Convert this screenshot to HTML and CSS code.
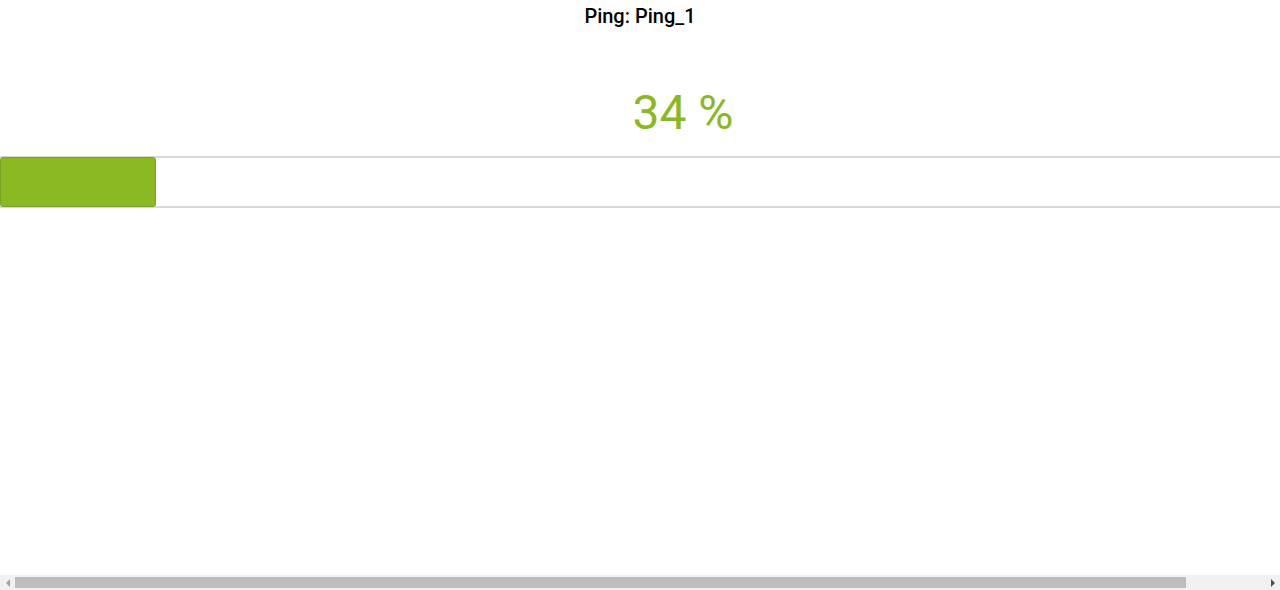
FILE: index.html
```html
<!DOCTYPE html>
<html>
<head>
<meta charset="utf-8">
<link rel="stylesheet" href="styles.css">
</head>
<body>
<div class="page">
  <div class="title">Ping: Ping_1</div>
  <div class="percent">34 %</div>
  <div class="track">
    <div class="fill"></div>
  </div>
</div>
<div class="hscroll">
  <div class="arrow arrow-left"></div>
  <div class="thumb-area"><div class="thumb"></div></div>
  <div class="arrow arrow-right"></div>
</div>
</body>
</html>
```

FILE: styles.css
```css
html, body {
  margin: 0;
  padding: 0;
  background: #ffffff;
  overflow: hidden;
}
body {
  font-family: Roboto, "Liberation Sans", sans-serif;
}
.page {
  width: 100%;
}
.title {
  text-align: center;
  font-size: 20px;
  font-weight: 500;
  line-height: 24px;
  padding-top: 4px;
  color: #000000;
}
.percent {
  margin-top: 57px;
  padding-left: 86px;
  text-align: center;
  font-size: 48px;
  line-height: 56px;
  color: #8ab823;
}
.track {
  margin-top: 15px;
  height: 48px;
  border-top: 2px solid #d9d9d9;
  border-bottom: 2px solid #d9d9d9;
}
.fill {
  width: 154px;
  height: 48px;
  margin-top: -1px;
  background: #8ab923;
  border: 1px solid #79a51c;
  border-radius: 3px;
}
.hscroll {
  position: fixed;
  left: 0;
  right: 0;
  bottom: 0;
  height: 15px;
  background: #f1f1f1;
  display: flex;
  align-items: center;
}
.arrow {
  width: 15px;
  height: 15px;
  display: flex;
  align-items: center;
  justify-content: center;
}
.arrow-left::before {
  content: "";
  width: 0;
  height: 0;
  border-top: 4px solid transparent;
  border-bottom: 4px solid transparent;
  border-right: 4px solid #a3a3a3;
}
.arrow-right::before {
  content: "";
  width: 0;
  height: 0;
  border-top: 4px solid transparent;
  border-bottom: 4px solid transparent;
  border-left: 4px solid #505050;
}
.thumb-area {
  flex: 1;
  height: 15px;
  display: flex;
  align-items: center;
}
.thumb {
  width: 1171px;
  height: 11px;
  background: #bdbdbd;
}
```
